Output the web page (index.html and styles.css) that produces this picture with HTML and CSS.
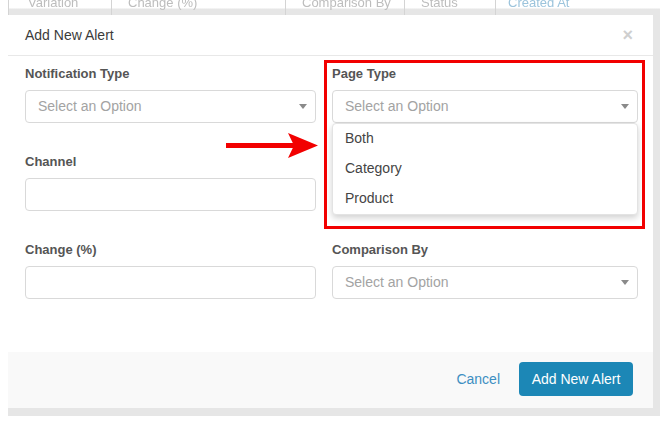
FILE: index.html
```html
<!DOCTYPE html>
<html>
<head>
<meta charset="utf-8">
<link rel="stylesheet" href="styles.css">
</head>
<body>
<div class="page">
  <div class="thead">
    <div class="th c1">Variation</div>
    <div class="th c2">Change (%)</div>
    <div class="th c3">Comparison By</div>
    <div class="th c4">Status</div>
    <div class="th c5 link">Created At</div>
  </div>
</div>

<div class="modal">
  <div class="modal-header">
    <span class="title">Add New Alert</span>
    <span class="close">&times;</span>
  </div>
  <div class="modal-body">
    <div class="grid">
      <div class="field">
        <label class="lbl">Notification Type</label>
        <div class="control select"><span class="ph">Select an Option</span><span class="caret"></span></div>
      </div>
      <div class="field">
        <label class="lbl">Page Type</label>
        <div class="control select"><span class="ph">Select an Option</span><span class="caret"></span></div>
      </div>
      <div class="field">
        <label class="lbl">Channel</label>
        <div class="control"></div>
      </div>
      <div class="field covered">
        <label class="lbl">Variation</label>
        <div class="control select"><span class="ph">Select an Option</span><span class="caret"></span></div>
      </div>
      <div class="field">
        <label class="lbl">Change (%)</label>
        <div class="control"></div>
      </div>
      <div class="field">
        <label class="lbl">Comparison By</label>
        <div class="control select"><span class="ph">Select an Option</span><span class="caret"></span></div>
      </div>
    </div>
  </div>
  <div class="modal-footer">
    <span class="cancel">Cancel</span>
    <span class="btn">Add New Alert</span>
  </div>
</div>

<ul class="dropdown">
  <li>Both</li>
  <li>Category</li>
  <li>Product</li>
</ul>

<div class="highlight"></div>

<svg class="arrow" width="94" height="28" viewBox="0 0 94 28">
  <rect x="0" y="11" width="70" height="5" fill="#f20000"/>
  <path d="M62 1 L92 13.5 L62 26 L68 13.5 Z" fill="#f20000"/>
</svg>
</body>
</html>
```

FILE: styles.css
```css
* { box-sizing: border-box; }
html, body { margin: 0; padding: 0; }
body {
  width: 671px;
  height: 426px;
  background: #ffffff;
  font-family: "Liberation Sans", Arial, sans-serif;
  position: relative;
  overflow: hidden;
}

.page {
  position: absolute;
  left: 8px;
  top: 0;
  width: 652px;
  height: 416px;
  background: linear-gradient(#ffffff 0, #ffffff 8px, #e6e6e6 9px, #e6e6e6 100%);
}
.thead {
  display: grid;
  grid-template-columns: 103px 174px 119px 91px 1fr;
  height: 15px;
  overflow: hidden;
}
.th {
  font-size: 13px;
  line-height: 13px;
  color: #bdbdbd;
  padding-left: 16px;
  margin-top: -4px;
  border-left: 1px solid #d4d4d4;
  filter: blur(0.7px);
}
.th.c1 { padding-left: 19px; }
.th.c5 { padding-left: 12px; }
.th.link { color: #9cc4dc; }

.modal {
  position: absolute;
  left: 8px;
  top: 15px;
  width: 645px;
  height: 393px;
  background: #fff;
  display: flex;
  flex-direction: column;
}
.modal-header {
  height: 41px;
  border-bottom: 1px solid #e8e8e8;
  display: flex;
  align-items: center;
  justify-content: space-between;
  padding: 0 20px 0 17px;
}
.title {
  font-size: 14px;
  color: #3b3b3b;
}
.close {
  font-size: 18px;
  font-weight: bold;
  color: #cfcfcf;
  line-height: 18px;
}

.modal-body {
  flex: 1;
  padding: 10px 15px 0 17px;
}
.grid {
  display: grid;
  grid-template-columns: 291px 306px;
  column-gap: 16px;
  row-gap: 31px;
}
.field {
  display: flex;
  flex-direction: column;
}
.covered .lbl, .covered .ph { visibility: hidden; }
.lbl {
  font-size: 13px;
  line-height: 16px;
  font-weight: bold;
  color: #555;
  margin-bottom: 8px;
}
.control {
  height: 33px;
  border: 1px solid #d9d9d9;
  border-radius: 4px;
  background: #fff;
  display: flex;
  align-items: center;
  justify-content: space-between;
  padding: 0 8px 2px 12px;
}
.ph {
  font-size: 14px;
  color: #a3a3a3;
}
.caret {
  width: 0;
  height: 0;
  border-left: 4px solid transparent;
  border-right: 4px solid transparent;
  border-top: 5px solid #8a8a8a;
  margin-top: 2px;
}

.modal-footer {
  height: 56px;
  background: #f9f9f9;
  display: flex;
  align-items: center;
  justify-content: flex-end;
  gap: 19px;
  padding: 0 20px 2px 0;
}
.cancel {
  font-size: 14px;
  color: #3d8fc2;
}
.btn {
  background: #1c87b6;
  color: #fff;
  font-size: 14px;
  height: 34px;
  width: 114px;
  border-radius: 4px;
  display: flex;
  align-items: center;
  justify-content: center;
}

.dropdown {
  position: absolute;
  left: 332px;
  top: 123px;
  width: 306px;
  margin: 0;
  padding: 0;
  list-style: none;
  background: #fff;
  border: 1px solid #e3e3e3;
  border-radius: 4px;
  box-shadow: 0 3px 6px rgba(0,0,0,0.18);
}
.dropdown li {
  height: 30px;
  line-height: 28px;
  padding-left: 12px;
  font-size: 14px;
  color: #444;
}

.highlight {
  position: absolute;
  left: 324px;
  top: 60px;
  width: 321px;
  height: 169px;
  border: 3px solid #f20000;
}

.arrow {
  position: absolute;
  left: 226px;
  top: 132px;
}
```
